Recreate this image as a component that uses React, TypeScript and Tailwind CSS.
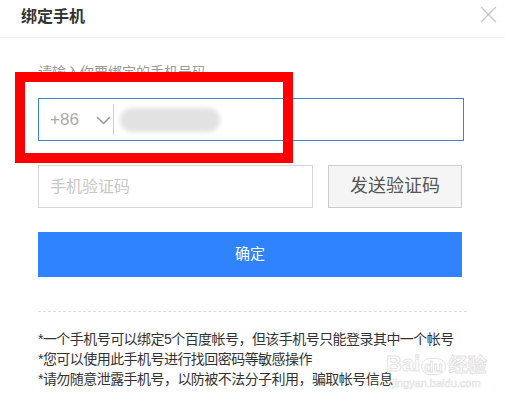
import React from "react";

export default function App() {
  const font = { fontFamily: '"Liberation Sans", "Noto Sans CJK SC", sans-serif' };
  return (
    <div className="relative w-[505px] h-[410px] bg-white overflow-hidden text-[#333]" style={font}>
      {/* Watermark */}
      <div className="absolute left-[386px] top-[353px] flex flex-col items-center pointer-events-none select-none">
        <div className="flex items-end text-[22px] font-bold text-white leading-none" style={{ WebkitTextStroke: "1px #e4e4e4" }}>
          <span>Bai</span>
          <span className="mx-[1px] rounded-full border border-[#e4e4e4] px-[2px] text-[15px]">du</span>
          <span className="ml-[2px] text-[19px]">经验</span>
        </div>
        <div className="mt-[3px] text-[11px] text-white leading-none" style={{ WebkitTextStroke: "0.6px #e2e2e2" }}>
          jingyan.baidu.com
        </div>
      </div>

      {/* Header */}
      <div className="relative flex items-center justify-between h-[38px] border-b border-[#f0f0f0] pl-[21px] pr-[8px]">
        <div className="text-[16px] font-bold text-[#333] leading-none -mt-[4px]">绑定手机</div>
        <svg width="17" height="17" viewBox="0 0 17 17" className="-mt-[8px]">
          <path d="M1 1 L16 16 M16 1 L1 16" stroke="#c8c8c8" strokeWidth="1.4" fill="none" />
        </svg>
      </div>

      {/* Body */}
      <div className="relative flex flex-col pl-[38px] pr-[41px]">
        <div className="mt-[24px] text-[14px] leading-[20px] text-[#999]">请输入你要绑定的手机号码</div>

        <div className="mt-[16px] h-[43px] w-[426px] border border-[#3a86d6] flex items-center">
          <span className="ml-[11px] text-[17px] text-[#aaa] w-[40px]">+86</span>
          <svg width="15" height="9" viewBox="0 0 15 9" className="ml-[6px] mt-[2px]">
            <path d="M1 1 L7.5 7.5 L14 1" stroke="#999" strokeWidth="1.5" fill="none" />
          </svg>
          <div className="ml-[2px] w-px h-[31px] bg-[#ccc]" />
          <div className="ml-[6px] h-[24px] w-[100px] rounded-full bg-[#e2e2e2] blur-[2px]" />
        </div>

        <div className="mt-[24px] flex gap-[15px]">
          <div className="h-[43px] w-[275px] border border-[#d6d6d6] flex items-center pl-[11px] text-[16px] text-[#c8c8c8]">
            手机验证码
          </div>
          <div className="h-[43px] w-[134px] border border-[#cccccc] bg-[#f5f5f5] flex items-center justify-center text-[18px] text-[#555]">
            发送验证码
          </div>
        </div>

        <div className="mt-[24px] h-[45px] w-[424px] bg-[#3083ff] flex items-center justify-center text-white text-[15px]">
          确定
        </div>

        <div className="mt-[34px] w-[429px] border-t border-dashed border-[#dddddd]" />

        <div className="mt-[17px] text-[14px] leading-[20px] text-[#333] whitespace-nowrap tracking-[-0.55px]">
          <div>*一个手机号可以绑定5个百度帐号，但该手机号只能登录其中一个帐号</div>
          <div>*您可以使用此手机号进行找回密码等敏感操作</div>
          <div>*请勿随意泄露手机号，以防被不法分子利用，骗取帐号信息</div>
        </div>
      </div>

      {/* Red annotation box */}
      <div className="absolute left-[15px] top-[72px] w-[278px] h-[91px] border-[10px] border-[#ff0000]" />
    </div>
  );
}
